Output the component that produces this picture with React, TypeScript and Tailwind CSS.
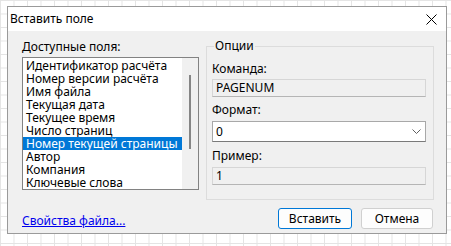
const fields = [
  'Идентификатор расчёта',
  'Номер версии расчёта',
  'Имя файла',
  'Текущая дата',
  'Текущее время',
  'Число страниц',
  'Номер текущей страницы',
  'Автор',
  'Компания',
  'Ключевые слова',
];

const selected = 'Номер текущей страницы';

export default function App() {
  return (
    <div className="w-[451px] h-[246px] overflow-hidden bg-white bg-[linear-gradient(to_right,#e4e4e4_1px,transparent_1px),linear-gradient(to_bottom,#e4e4e4_1px,transparent_1px)] bg-[size:13.5px_13.5px] pl-[7px] pt-[6px] font-['Noto_Sans',sans-serif] text-[12px] text-black">
      <div className="w-[440px] h-[228px] border border-[#9a9a9a] bg-[#f0f0f0] flex flex-col">
        {/* title bar */}
        <div className="h-[24px] bg-white flex items-center justify-between pl-[2px] pr-[9px]">
          <span className="text-[12px] leading-[16px]">Вставить поле</span>
          <svg width="11" height="11" viewBox="0 0 11 11" className="text-black">
            <path d="M0.5 0.5L10.5 10.5M10.5 0.5L0.5 10.5" stroke="currentColor" strokeWidth="1" />
          </svg>
        </div>

        <div className="flex pl-[14px] pt-[7px]">
          {/* available fields */}
          <div className="flex flex-col">
            <div className="h-[16px] leading-[16px] mt-[1px]">Доступные поля:</div>
            <div className="mt-[2px] w-[177px] h-[133px] border border-[#828282] bg-white flex">
              <ul className="flex-1 flex flex-col pt-px">
                {fields.map((f) => (
                  <li
                    key={f}
                    className={
                      f === selected
                        ? 'h-[13px] leading-[13px] pl-[3px] bg-[#0078d7] text-white'
                        : 'h-[13px] leading-[13px] pl-[3px]'
                    }
                  >
                    {f}
                  </li>
                ))}
              </ul>
              <div className="w-[16px] bg-[#f0f0f0] flex justify-center pt-[17px]">
                <div className="w-[2px] h-[74px] bg-[#858585]" />
              </div>
            </div>
          </div>

          {/* options group */}
          <fieldset className="ml-[7px] w-[228px] h-[162px] border border-[#dcdcdc] pl-[5px] pr-[7px]">
            <legend className="ml-[2px] px-px h-[16px] leading-[16px]">Опции</legend>
            <div className="h-[16px] leading-[16px] mt-[7px]">Команда:</div>
            <div className="mt-[2px] h-[18px] border border-[#d6d6d6] border-b-[#b5b5b5] bg-[#f0f0f0] flex items-center pl-[3px]">
              PAGENUM
            </div>
            <div className="h-[16px] leading-[16px] mt-[5px]">Формат:</div>
            <div className="mt-[3px] h-[21px] border border-[#a8a8a8] border-b-[#7a7a7a] bg-white flex items-center justify-between pl-[3px] pr-[4px]">
              <span>0</span>
              <svg width="9" height="5" viewBox="0 0 9 5">
                <path d="M0.5 0.5L4.5 4.5L8.5 0.5" fill="none" stroke="#5f5f5f" strokeWidth="1" />
              </svg>
            </div>
            <div className="h-[16px] leading-[16px] mt-[6px]">Пример:</div>
            <div className="mt-[3px] h-[18px] border border-[#d6d6d6] border-b-[#b5b5b5] bg-[#f0f0f0] flex items-center pl-[3px]">
              1
            </div>
          </fieldset>
        </div>

        {/* bottom row */}
        <div className="flex items-center justify-between pl-[14px] pr-[13px] mt-[8px]">
          <a className="text-[#0000ee] underline leading-[16px] mt-[5px]">Свойства файла...</a>
          <div className="flex gap-[9px]">
            <button className="w-[74px] h-[21px] rounded-[3px] border border-[#0078d7] bg-[#fdfdfd] leading-[16px]">
              Вставить
            </button>
            <button className="w-[72px] h-[21px] rounded-[3px] border border-[#d0d0d0] bg-[#fdfdfd] leading-[16px]">
              Отмена
            </button>
          </div>
        </div>
      </div>
    </div>
  );
}
